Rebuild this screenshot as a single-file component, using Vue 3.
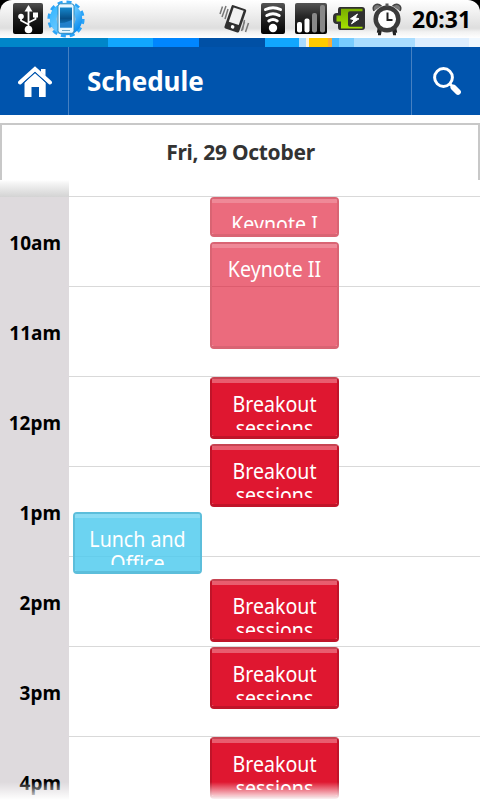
<script setup>
const stripes = [
  { w: 108, c: '#0086c9' }, { w: 45, c: '#11a7ff' }, { w: 46, c: '#0086ff' },
  { w: 66, c: '#0050a5' }, { w: 34, c: '#11a7ff' }, { w: 7, c: '#a8dbff' },
  { w: 3, c: '#fff3da' }, { w: 19, c: '#ffca00' }, { w: 4, c: '#fbac35' },
  { w: 7, c: '#44b8ff' }, { w: 15, c: '#78ccff' }, { w: 61, c: '#aaddff' },
  { w: 54, c: '#ddeeff' }, { w: 11, c: '#f0f8ff' },
]
const hours = ['10am', '11am', '12pm', '1pm', '2pm', '3pm', '4pm']
const lanes = [
  [{ title: 'Lunch and Office', kind: 'break', gap: 332, h: 62 }],
  [
    { title: 'Keynote I', kind: 'keynote', gap: 17, h: 40 },
    { title: 'Keynote II', kind: 'keynote', gap: 5, h: 107 },
    { title: 'Breakout sessions', kind: 'session', gap: 28, h: 62 },
    { title: 'Breakout sessions', kind: 'session', gap: 5, h: 63 },
    { title: 'Breakout sessions', kind: 'session', gap: 72, h: 63 },
    { title: 'Breakout sessions', kind: 'session', gap: 5, h: 62 },
    { title: 'Breakout sessions', kind: 'session', gap: 28, h: 62 },
  ],
]
</script>

<template>
  <div class="screen">
    <div class="status-frame">
      <div class="status">
        <svg class="left-icons" width="90" height="38" viewBox="0 0 90 38">
          <defs>
            <linearGradient id="tile" x1="0" y1="0" x2="0" y2="1"><stop offset="0" stop-color="#505050" /><stop offset=".35" stop-color="#222" /><stop offset="1" stop-color="#020202" /></linearGradient>
            <linearGradient id="gear" x1="0" y1="0" x2="1" y2="1"><stop offset="0" stop-color="#38b8ff" /><stop offset=".5" stop-color="#62c5ff" /><stop offset="1" stop-color="#0589ef" /></linearGradient>
            <linearGradient id="glass" x1="0" y1="0" x2="0" y2="1"><stop offset="0" stop-color="#1687cc" /><stop offset=".55" stop-color="#075089" /><stop offset="1" stop-color="#1a8cd8" /></linearGradient>
          </defs>
          <rect x="13" y="3" width="30" height="31" rx="2" fill="url(#tile)" />
          <g stroke="#fff" stroke-width="1.8" fill="none">
            <path d="M28.5 28V9M21 17v3.5l7.5 4M35.5 16v3l-7 3.5" />
          </g>
          <g fill="#fff">
            <path d="M28.5 5l4 6.5h-8z" /><circle cx="28.5" cy="29.5" r="3.8" />
            <circle cx="21" cy="16.5" r="2.8" /><rect x="33" y="12.5" width="5" height="5" />
          </g>
          <circle cx="66" cy="19" r="16.4" fill="none" stroke="#2ba4f8" stroke-width="4.4" stroke-dasharray="4.8 3.787" />
          <circle cx="66" cy="19" r="12.2" fill="none" stroke="url(#gear)" stroke-width="8" />
          <circle cx="66" cy="19" r="9.5" fill="#b8c5ce" />
          <rect x="58" y="3.8" width="16" height="29.5" rx="2.5" fill="#e8f7ff" stroke="#318bbd" />
          <rect x="60" y="7.5" width="12" height="20" fill="url(#glass)" />
          <path d="M60 23c5 .5 9-2 12-3v7.500H60z" fill="#2180cb" />
          <path d="M62 30.500h8" stroke="#6faac9" />
        </svg>
        <svg class="right-icons" width="190" height="38" viewBox="215 0 190 38">
          <defs>
            <linearGradient id="tile2" x1="0" y1="0" x2="0" y2="1"><stop offset="0" stop-color="#555" /><stop offset=".4" stop-color="#292929" /><stop offset="1" stop-color="#020202" /></linearGradient>
            <linearGradient id="green" x1="0" y1="0" x2="0" y2="1"><stop offset="0" stop-color="#79ae00" /><stop offset="1" stop-color="#a5e000" /></linearGradient>
          </defs>
          <g transform="rotate(19 235 19)">
            <rect x="227.500" y="6.500" width="15.500" height="24.500" rx="1.500" fill="#303030" />
            <rect x="230" y="8.500" width="10.500" height="15" fill="#f1f1f1" />
            <circle cx="235.300" cy="27.200" r="1.800" fill="#fff" />
          </g>
          <path d="M222.500 6.500l-2.500 7.500M226 6l-4 11M228 9l-3 10M241.500 31l3-9M245.500 32l3-9M242.500 30l2-10" stroke="#777" stroke-width="1.500" />
          <rect x="261" y="3" width="24" height="31" rx="2" fill="url(#tile2)" />
          <g fill="none" stroke="#fff" stroke-width="3" stroke-linecap="round">
            <path d="M265.500 9.500q7.500-3.500 15 0M266.800 15.500q6.200-3.500 12.400 0M268.800 21q4.200-3 8.400 0" />
          </g>
          <circle cx="273" cy="28" r="4.200" fill="#fff" />
          <rect x="295" y="3" width="32" height="31" rx="2" fill="url(#tile2)" />
          <rect x="297" y="22" width="5" height="10.500" rx="2" fill="#fff" />
          <rect x="304.500" y="18.500" width="5" height="14" rx="2" fill="#fff" />
          <rect x="312" y="13" width="5" height="19.500" rx="2" fill="#888" />
          <rect x="320" y="5" width="5" height="27.500" rx="2" fill="#888" />
          <path d="M340 7h22q3 0 3 3v17q0 3-3 3h-22q-2 0-2-3v-3h-1q-4 0-4-4v-3q0-4 4-4h1v-3q0-3 2-3z" fill="#303030" />
          <path d="M341 8.800h21.500v2.500H350q-2 0-2 2v11.500q0 2 2 2h12.500v1.700H341v-7h-4.500v-6h4.500z" fill="url(#green)" />
          <path d="M357.500 14l-7 4.800 3.500 1-2.500 4 7.500-5-3.700-1z" fill="#fff" stroke="#fff" stroke-linejoin="round" />
          <path d="M374 11q-2-4 1-6t6.500 1M400 11q2-4-1-6t-6.500 1" fill="#777" stroke="#444" stroke-width="1.500" />
          <path d="M380 28l-1 5h-1M394 28l1 5h1" stroke="#222" stroke-width="4.500" fill="none" />
          <circle cx="387" cy="19" r="11.300" fill="#fff" stroke="#3b3b3b" stroke-width="4.500" />
          <path d="M387.500 12.500v7.500h5" fill="none" stroke="#222" stroke-width="2" />
          <path d="M387 3.500v3" stroke="#555" stroke-width="3" />
        </svg>
        <span class="clock">20:31</span>
      </div>
    </div>
    <div class="stripes">
      <i v-for="(s, i) in stripes" :key="i" :style="{ width: s.w + 'px', background: s.c }"></i>
    </div>
    <header class="bar">
      <div class="home">
        <svg width="34" height="31" viewBox="0 0 34 31">
          <path d="M2 16.500L17 3l15 13.500" fill="none" stroke="#fff" stroke-width="4" stroke-linecap="round" />
          <path d="M23 3h4.500v7L23 6z" fill="#fff" />
          <path d="M17 7l10.700 9.800V31H21V21h-7.500v10H6.500V16.800z" fill="#fff" />
          <path d="M5 17.300L17 6.500l12 10.800" fill="none" stroke="#0054ad" stroke-width="1" />
        </svg>
      </div>
      <h1>Schedule</h1>
      <div class="search">
        <svg width="30" height="30" viewBox="0 0 30 30">
          <circle cx="11.500" cy="11.500" r="8.900" fill="none" stroke="#fff" stroke-width="3" />
          <path d="M17.500 17.500l3 3" stroke="#fff" stroke-width="3" />
          <path d="M21.500 21.500l4.500 4.500" stroke="#fff" stroke-width="5.800" stroke-linecap="round" />
        </svg>
      </div>
    </header>
    <div class="date">Fri, 29 October</div>
    <main class="calendar">
      <div class="hours">
        <div v-for="h in hours" :key="h" class="hour">{{ h }}</div>
      </div>
      <div class="lanes">
        <div v-for="(lane, l) in lanes" :key="l" class="lane">
          <div
            v-for="(e, i) in lane" :key="i" class="event" :class="e.kind"
            :style="{ marginTop: e.gap + 'px', height: e.h + 'px' }"
          >
            <div class="title">{{ e.title }}</div>
          </div>
        </div>
      </div>
      <div class="fade-top"></div>
      <div class="fade-bottom"></div>
    </main>
  </div>
</template>

<style>
body { background: #fff; }
</style>

<style scoped>
.screen { width: 480px; height: 800px; overflow: hidden; display: flex; flex-direction: column; background: #fff; font-family: "Noto Sans", sans-serif; }
.status-frame { height: 38px; background: #000; flex: none; }
.status { height: 38px; display: flex; align-items: center; border-radius: 12px 12px 0 0; background: linear-gradient(#fff 0, #f4f4f4 25%, #dedede 74%, #f2f2f2 84%, #fff 100%); }
.left-icons, .right-icons { flex: none; }
.right-icons { margin-left: 125px; }
.clock { margin-left: 7px; font-size: 23px; font-weight: 700; line-height: 38px; color: #000; }
.stripes { display: flex; height: 9px; flex: none; }
.stripes i { flex: none; height: 9px; }
.bar { height: 68px; flex: none; display: flex; background: #0054ad; color: #fff; }
.home { width: 67px; padding-left: 1px; border-right: 1px solid #4580c2; display: flex; align-items: center; justify-content: center; }
.home svg { margin-top: 1px; }
h1 { margin: 0; flex: 1; padding-left: 18px; font-size: 26px; line-height: 68px; font-weight: 700; }
.search { width: 69px; padding-left: 2px; box-sizing: border-box; border-left: 1px solid #4580c2; display: flex; align-items: center; justify-content: center; }
.date { flex: none; box-sizing: border-box; height: 57px; margin-top: 8px; border: 2px solid #c8c8c8; border-bottom: 0; padding-left: 1px; text-align: center; font-size: 21px; letter-spacing: -0.3px; line-height: 55px; font-weight: 700; color: #333; }
.calendar { position: relative; flex: none; height: 620px; display: flex; background: repeating-linear-gradient(#d9d9d9 0 1px, transparent 1px 90px) 0 16px no-repeat; overflow: hidden; }
.hours { width: 69px; flex: none; background: #dedadd; padding-top: 18px; box-sizing: border-box; }
.hour { height: 90px; line-height: 90px; padding-right: 8px; text-align: right; font-size: 19px; font-weight: 700; color: #000; }
.lanes { display: flex; gap: 8px; padding-left: 4px; }
.lane { width: 129px; display: flex; flex-direction: column; }
.event { flex: none; box-sizing: border-box; border: 2px solid; border-bottom-width: 3px; border-radius: 4px; padding: 13px 6px 6px; color: #fff; background-clip: padding-box; background-image: linear-gradient(rgba(255, 255, 255, .3) 0 4px, transparent 4px); }
.title { height: 100%; overflow: hidden; text-align: center; font-size: 21.300px; line-height: 24px; transform: scaleX(.92); }
.session { background-color: #df1730; border-color: #c01429; border-top-color: #c74452; }
.keynote { background-color: rgba(223, 13, 42, .61); border-color: #d96473; background-image: linear-gradient(rgba(255, 255, 255, .2) 0 4px, transparent 4px); }
.break { background-color: rgba(80, 202, 238, .84); border-color: #5cbedb; background-image: linear-gradient(rgba(255, 255, 255, .2) 0 4px, transparent 4px); }
.fade-top { position: absolute; left: 0; top: 0; width: 69px; height: 17px; background: linear-gradient(#fff 0, #f4f4f4 20%, #d3d3d3 100%); }
.fade-bottom { position: absolute; left: 0; right: 0; bottom: 0; height: 18px; background: linear-gradient(rgba(255, 255, 255, 0), #fff); }
</style>
